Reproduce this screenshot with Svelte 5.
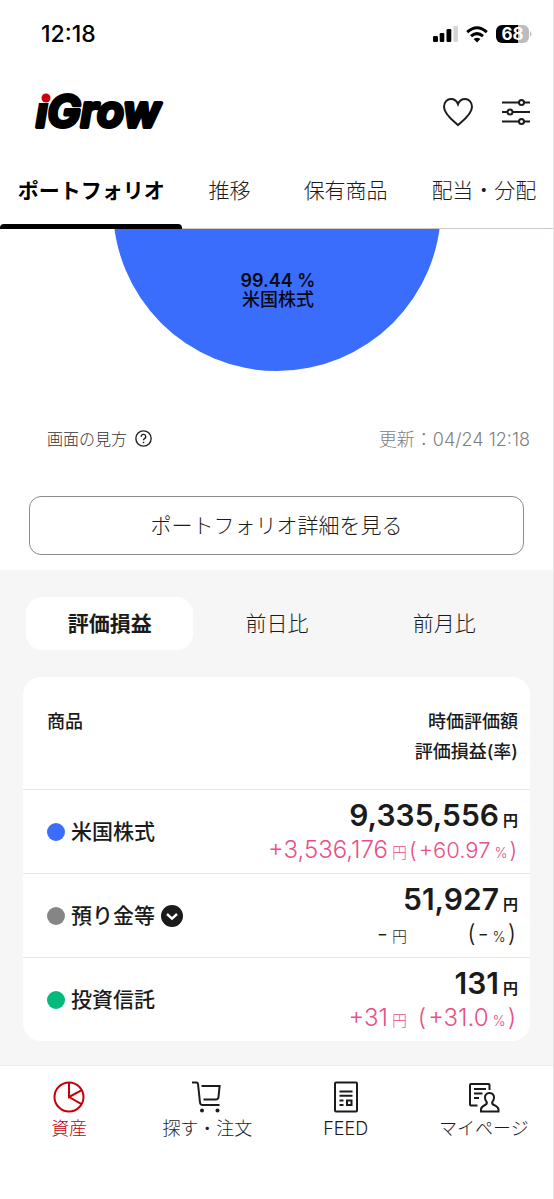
<script lang="ts">
  interface Holding {
    name: string;
    color: string;
    amount: string;
    gain: string;
    rate: string;
    plus?: boolean;
    long?: boolean; // smaller digits so that the rate fits its column
    expandable?: boolean;
  }

  const tabs = ['ポートフォリオ', '推移', '保有商品', '配当・分配'];
  const periods = ['評価損益', '前日比', '前月比'];
  const menu = [
    { id: 'asset', label: '資産' },
    { id: 'order', label: '探す・注文' },
    { id: 'feed', label: 'FEED' },
    { id: 'mypage', label: 'マイページ' }
  ];

  const holdings: Holding[] = [
    { name: '米国株式', color: '#3a6dfb', amount: '9,335,556', gain: '+3,536,176', rate: '+60.97', plus: true, long: true },
    { name: '預り金等', color: '#858585', amount: '51,927', gain: '-', rate: '-', expandable: true },
    { name: '投資信託', color: '#06b97c', amount: '131', gain: '+31', rate: '+31.0', plus: true }
  ];

  let activeTab = $state(0);
  let activePeriod = $state(0);
  let activeMenu = $state('asset');
</script>

<div class="app">
  <div class="status">
    <span class="time">12:18</span>
    <div class="indicators">
      <svg width="25" height="16" viewBox="0 0 25 16" aria-hidden="true">
        <rect x="0" y="10" width="5" height="6" rx="1.2" />
        <rect x="6.7" y="7" width="4.6" height="9" rx="1.2" />
        <rect x="13.5" y="3" width="4.8" height="13" rx="1.2" />
        <rect x="20.4" y="0" width="4.6" height="16" rx="1.2" fill="#d5d5d5" />
      </svg>
      <svg width="22" height="17" viewBox="0 0 22 17" fill="none" stroke="#000" stroke-width="3" aria-hidden="true">
        <path d="M1.2 6.2Q11 -2.6 20.8 6.2" />
        <path d="M5 10.2Q11 5 17 10.2" />
        <path d="M7.6 12.9Q11 10.4 14.4 12.9L11 16.4Z" fill="#000" stroke="none" />
      </svg>
      <svg width="36" height="18" viewBox="0 0 36 18" aria-hidden="true">
        <path d="M6 0H22V18H6A6 6 0 0 1 0 12V6A6 6 0 0 1 6 0Z" />
        <path d="M22 0H27A6 6 0 0 1 33 6V12A6 6 0 0 1 27 18H22Z" fill="#bcbcbc" />
        <path d="M34 6Q37 9 34 12Z" fill="#bcbcbc" />
        <text x="16.5" y="15" text-anchor="middle" class="battery">68</text>
      </svg>
    </div>
  </div>

  <header>
    <svg class="logo" width="150" height="50" viewBox="0 0 150 50" role="img" aria-label="iGrow">
      <text x="3" y="40" class="logo-text">iGrow</text>
      <path d="M4 1H20L18 16H4Z" fill="#fff" />
      <circle cx="13" cy="11" r="4.500" fill="#c8000f" />
    </svg>
    <div class="actions">
      <button aria-label="お気に入り">
        <svg width="32" height="30" viewBox="0 0 32 30" fill="none" stroke="#1b1b1b" stroke-width="2">
          <path d="M16 28C13 25 2 18 2 9.800C2 5 5.300 2 9 2C12.300 2 14.800 4 16 7.200C17.200 4 19.700 2 23 2C26.700 2 30 5 30 9.800C30 18 19 25 16 28Z" />
        </svg>
      </button>
      <button aria-label="表示設定">
        <svg width="28" height="28" viewBox="0 0 28 28" fill="#fff" stroke="#1b1b1b" stroke-width="2">
          <path d="M0 4.500H28M0 14H28M0 23.500H28" />
          <circle cx="19.500" cy="4.500" r="2.500" />
          <circle cx="8" cy="14" r="2.500" />
          <circle cx="19.500" cy="23.500" r="2.500" />
        </svg>
      </button>
    </div>
  </header>

  <nav class="tabs">
    {#each tabs as tab, i}
      <button class:active={activeTab === i} onclick={() => (activeTab = i)}>{tab}</button>
    {/each}
  </nav>

  <section class="summary">
    <svg class="chart" width="328" height="142" viewBox="0 0 328 142">
      <circle cx="164" cy="-22" r="164" fill="#3a6dfb" />
      <text x="165" y="58" class="chart-rate">99.44 %</text>
      <text x="165" y="77" class="chart-name">米国株式</text>
    </svg>
    <div class="info">
      <button class="help">
        画面の見方
        <svg width="17" height="17" viewBox="0 0 16 16" fill="none" stroke="#222" stroke-width="1.300">
          <circle cx="8" cy="8" r="7.200" />
          <path d="M5.900 6.400A2.100 2.100 0 1 1 8.900 8.100Q8 8.600 8 9.700M8 11V12.400" />
        </svg>
      </button>
      <span class="updated">更新：<time>04/24 12:18</time></span>
    </div>
    <button class="detail">ポートフォリオ詳細を見る</button>
  </section>

  <main>
    <div class="periods">
      {#each periods as period, i}
        <button class:active={activePeriod === i} onclick={() => (activePeriod = i)}>{period}</button>
      {/each}
    </div>

    <table>
      <thead>
        <tr>
          <th>商品</th>
          <th class="right">時価評価額<br />評価損益(率)</th>
        </tr>
      </thead>
      <tbody>
        {#each holdings as item (item.name)}
          <tr>
            <td>
              <div class="name">
                <span class="dot" style="background: {item.color}"></span>
                {item.name}
                {#if item.expandable}
                  <button class="expand" aria-label="内訳を表示">
                    <svg width="22" height="22" viewBox="0 0 22 22" fill="none">
                      <circle cx="11" cy="11" r="11" fill="#1b1b1b" />
                      <path d="M6 9L11 13.600L16 9" stroke="#fff" stroke-width="2.400" />
                    </svg>
                  </button>
                {/if}
              </div>
            </td>
            <td class="right">
              <div class="amount">{item.amount}<small>円</small></div>
              <div class="change" class:plus={item.plus}>
                <span>{item.gain}<small>円</small></span>
                <span class="rate" class:long={item.long}>
                  <i>(</i>{item.rate}<small>%</small><i>)</i>
                </span>
              </div>
            </td>
          </tr>
        {/each}
      </tbody>
    </table>
  </main>

  <nav class="menu">
    {#each menu as item (item.id)}
      <button class:active={activeMenu === item.id} onclick={() => (activeMenu = item.id)}>
        <svg width="32" height="32" viewBox="0 0 32 32" fill="none" stroke="currentColor" stroke-width="2">
          {#if item.id === 'asset'}
            <circle cx="16" cy="16" r="14.500" />
            <path d="M16 1.500V16L28.800 9.200M16 16L28.600 23.200" />
          {:else if item.id === 'order'}
            <path d="M1 1.500H5.500Q6.800 1.500 7 3L9 21.500Q9.300 24 11.500 24H28.500" />
            <path d="M10.500 5H28.600L27.500 16Q27.200 18.500 24.800 18.500H12.500" />
            <circle cx="11" cy="29.500" r="2" fill="currentColor" stroke="none" />
            <circle cx="26.500" cy="29.500" r="2" fill="currentColor" stroke="none" />
          {:else if item.id === 'feed'}
            <rect x="5" y="1.500" width="22" height="29" rx="1" />
            <path d="M9.500 10.500H22.500M9.500 14.800H22.500M9.500 19.500H13.500M9.500 24H13.500" />
            <rect x="17" y="19.500" width="4.500" height="4.500" />
          {:else}
            <path d="M9.500 24.500H3Q2 24.500 2 23.500V4Q2 3 3 3H20.500Q21.500 3 21.500 4V9" />
            <path d="M6 8H18M6 12.500H14.500M6 17H11" />
            <path d="M21.500 12C18 12 16.800 14.500 17 17C17.100 19 18 20 18.700 21C19.200 22.500 18.500 23.300 17 24C14.500 25.200 13 26 13 28.500V30.500H30.500V28.500C30.500 26 28.500 25.200 26 24C24.500 23.300 23.800 22.500 24.300 21C25 20 25.900 19 26 17C26.200 14.500 25 12 21.500 12Z" />
          {/if}
        </svg>
        {item.label}
      </button>
    {/each}
  </nav>
</div>

<style>
  :global(body) {
    margin: 0;
    background: #fff;
  }

  .app {
    min-height: 100vh;
    box-sizing: border-box;
    display: flex;
    flex-direction: column;
    border-right: 1px solid #e4e4e4;
    background: #fff;
    color: #1b1b1b;
    font-family: Inter, 'Noto Sans CJK JP', sans-serif;
  }

  button {
    padding: 0;
    border: none;
    background: none;
    color: inherit;
    font-family: inherit;
    cursor: pointer;
  }

  svg {
    display: block;
    flex: none;
  }

  .status {
    display: flex;
    justify-content: space-between;
    align-items: center;
    height: 68px;
    padding: 0 21px 0 41px;
    color: #000;
  }

  .time {
    font-size: 23px;
    font-weight: 500;
  }

  .indicators {
    display: flex;
    align-items: center;
    gap: 8px;
  }

  .battery {
    font-size: 17px;
    font-weight: 700;
    fill: #fff;
  }

  header {
    display: flex;
    justify-content: space-between;
    align-items: center;
    height: 88px;
    padding: 0 23px 0 33px;
  }

  .logo-text {
    font-size: 44px;
    font-weight: 600;
    font-style: italic;
    stroke: #000;
    stroke-width: 4;
    stroke-linejoin: round;
  }

  .actions {
    display: flex;
    align-items: center;
    gap: 28px;
  }

  .tabs {
    display: grid;
    grid-template-columns: 33fr 17fr 25fr 25fr;
    height: 72px;
    border-bottom: 1px solid #cfc4c6;
  }

  .tabs button {
    position: relative;
    padding-bottom: 6px;
    font-size: 21px;
    font-weight: 300;
    white-space: nowrap;
  }

  .tabs .active {
    color: #000;
    font-weight: 700;
  }

  .tabs .active::after {
    content: '';
    position: absolute;
    left: 0;
    right: 0;
    bottom: -1px;
    height: 5px;
    border-radius: 4px 4px 0 0;
    background: #000;
  }

  .summary {
    padding: 0 29px 15px;
  }

  .chart {
    margin: 0 auto;
  }

  .chart-rate,
  .chart-name {
    font-size: 18px;
    text-anchor: middle;
    fill: #0a0a14;
  }

  .chart-rate {
    font-weight: 600;
  }

  .chart-name {
    font-weight: 500;
  }

  .info {
    display: flex;
    justify-content: space-between;
    align-items: center;
    height: 24px;
    margin: 55px -6px 46px 18px;
  }

  .help {
    display: flex;
    align-items: center;
    gap: 8px;
    color: #333;
    font-size: 16px;
    font-weight: 300;
  }

  .updated {
    color: #808080;
    font-size: 18px;
    font-weight: 300;
  }

  .detail {
    width: 100%;
    height: 59px;
    padding-bottom: 4px;
    border: 1px solid #8c8c8c;
    border-radius: 12px;
    font-size: 21px;
    font-weight: 300;
  }

  main {
    padding: 27px 23px 24px;
    background: #f6f6f6;
  }

  .periods {
    display: grid;
    grid-template-columns: repeat(3, 1fr);
    margin: 0 2px 27px 3px;
  }

  .periods button {
    height: 53px;
    padding-bottom: 4px;
    border-radius: 16px;
    font-size: 21px;
    font-weight: 300;
  }

  .periods .active {
    background: #fff;
    font-weight: 700;
  }

  table {
    width: 100%;
    border-spacing: 0;
    border-radius: 18px;
    background: #fff;
  }

  th,
  td {
    padding: 0 12px 0 24px;
    text-align: left;
  }

  th {
    height: 112px;
    box-sizing: border-box;
    padding-top: 30px;
    font-size: 18px;
    font-weight: 500;
    line-height: 30px;
    vertical-align: top;
  }

  td {
    height: 84px;
    box-sizing: border-box;
    border-top: 1px solid #e6e6e6;
  }

  .right {
    text-align: right;
  }

  .name {
    display: flex;
    align-items: center;
    gap: 6px;
    font-size: 21px;
    font-weight: 500;
    line-height: 28px;
    white-space: nowrap;
  }

  .dot {
    width: 18px;
    height: 18px;
    border-radius: 50%;
  }

  .amount {
    padding-top: 8px;
    font-size: 30px;
    font-weight: 600;
    line-height: 30px;
  }

  .change {
    display: flex;
    justify-content: flex-end;
    padding-bottom: 4px;
    font-size: 24px;
    font-weight: 300;
    line-height: 28px;
    white-space: nowrap;
  }

  .plus {
    color: #e94f86;
  }

  small {
    margin-left: 4px;
    font-size: 15px;
  }

  .rate {
    width: 111px;
  }

  .rate small {
    font-size: 14px;
  }

  .rate i {
    font-style: normal;
    margin: 0 2px;
  }

  .long {
    font-size: 22px;
  }

  .menu {
    flex: 1;
    display: grid;
    grid-template-columns: repeat(4, 1fr);
    align-items: start;
    padding: 15px 0 60px;
    border-top: 1px solid #ececec;
  }

  .menu button {
    display: flex;
    flex-direction: column;
    align-items: center;
    gap: 3px;
    font-size: 18px;
    font-weight: 300;
    line-height: 26px;
  }

  .menu .active {
    color: #c4000c;
  }
</style>
